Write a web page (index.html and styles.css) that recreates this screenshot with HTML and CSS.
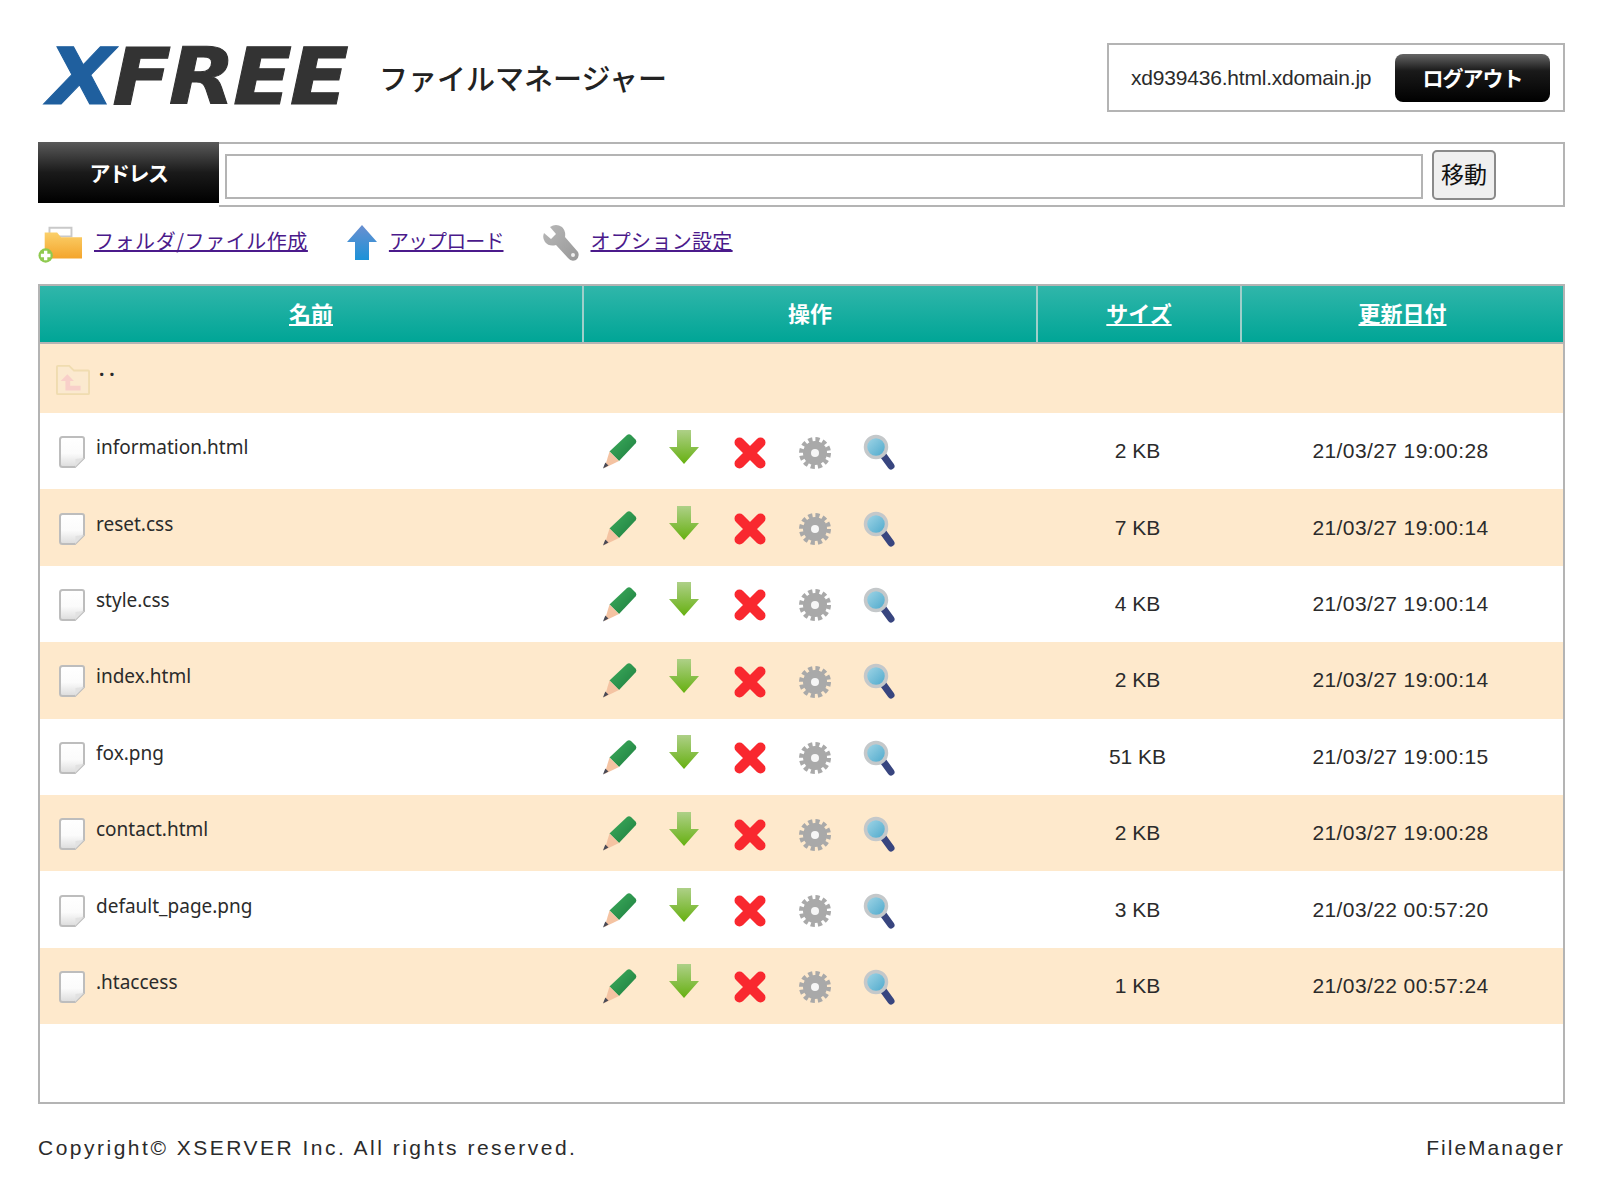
FILE: index.html
```html
<!DOCTYPE html>
<html lang="ja">
<head>
<meta charset="UTF-8" />
<title>XFREE ファイルマネージャー</title>
<link rel="stylesheet" href="styles.css">
</head>
<body>

<svg class="sprites" width="0" height="0">
  <defs>
    <linearGradient id="g-pencil" x1="0" y1="0" x2="1" y2="1">
      <stop offset="0" stop-color="#3fae5e" /><stop offset="1" stop-color="#1c7d3e" />
    </linearGradient>
    <linearGradient id="g-down" x1="0" y1="0" x2="0" y2="1">
      <stop offset="0" stop-color="#aed088" /><stop offset="1" stop-color="#66b010" />
    </linearGradient>
    <linearGradient id="g-lens" x1="0" y1="0" x2="1" y2="1">
      <stop offset="0" stop-color="#a6d8e8" /><stop offset="1" stop-color="#48a6ca" />
    </linearGradient>
    <linearGradient id="g-doc" x1="0" y1="0" x2="0" y2="1">
      <stop offset="0" stop-color="#fff" /><stop offset="0.55" stop-color="#fbfbfb" /><stop offset="1" stop-color="#dcdcdc" />
    </linearGradient>
    <linearGradient id="g-up" x1="0" y1="0" x2="0" y2="1">
      <stop offset="0" stop-color="#6a8fd0" /><stop offset="1" stop-color="#1c92d8" />
    </linearGradient>
    <linearGradient id="g-folder" x1="0" y1="0" x2="0" y2="1">
      <stop offset="0" stop-color="#fbd06a" /><stop offset="1" stop-color="#f4a52c" />
    </linearGradient>
    <linearGradient id="g-wrench" x1="0" y1="0" x2="1" y2="1">
      <stop offset="0" stop-color="#b8b8b8" /><stop offset="1" stop-color="#989898" />
    </linearGradient>
    <symbol id="i-pencil" viewBox="0 0 36 36">
      <path d="M8 18.500 25.500 2Q27.500 0.500 29.500 2L34 6.500Q35.500 8.500 34 10.500L17.500 28Z" fill="url(#g-pencil)" />
      <path d="M8 18.500 17.500 28 3 35Z" fill="#f4c3a2" />
      <path d="M3.800 29.500 7 32.500 1.500 35.500Z" fill="#4a4a55" />
    </symbol>
    <symbol id="i-down" viewBox="0 0 30 36">
      <path d="M8 1H22V18H30L15 35 0 18H8Z" fill="url(#g-down)" />
    </symbol>
    <symbol id="i-del" viewBox="0 0 34 34">
      <path d="M6.500 6.500 27.500 27.500M27.500 6.500 6.500 27.500" fill="none" stroke="#f9282f" stroke-width="10" stroke-linecap="round" />
    </symbol>
    <symbol id="i-gear" viewBox="0 0 34 34">
      <circle cx="17" cy="17" r="12" fill="#a9a9a9" />
      <circle cx="17" cy="17" r="13.500" fill="none" stroke="#a9a9a9" stroke-width="5" stroke-dasharray="4.100 2.970" />
      <circle cx="17" cy="17" r="4" fill="#f6f6f6" />
    </symbol>
    <symbol id="i-zoom" viewBox="0 0 34 37">
      <path d="M20 21 28 32" stroke="#38457f" stroke-width="7" stroke-linecap="round" />
      <circle cx="13" cy="13" r="10.500" fill="url(#g-lens)" stroke="#c4c8ca" stroke-width="3.500" />
    </symbol>
    <symbol id="i-doc" viewBox="0 0 26 32">
      <path d="M3.500 1H23Q25 1 25 3V22L16 31H3.500Q1 31 1 28.500V3.500Q1 1 3.500 1Z" fill="url(#g-doc)" stroke="#bdbdbd" stroke-width="2" />
      <path d="M16 31 16.500 23 25 22Z" fill="#e2e2e2" />
    </symbol>
    <symbol id="i-parent" viewBox="0 0 36 32">
      <path d="M2 1H14L19 6H34Q35 6 35 7V30Q35 31 34 31H2Q1 31 1 30V2Q1 1 2 1Z" fill="#fbe9cf" stroke="#f0dcb0" stroke-width="2" />
      <path d="M12 10 19 17H15V22H26V27H10V17H5Z" fill="#f8cfc9" />
    </symbol>
    <symbol id="i-newfolder" viewBox="0 0 46 38">
      <path d="M12 1H35V10H12Z" fill="#fff" stroke="#c9c9c9" stroke-width="2" />
      <path d="M7 6H20L24 11H46V33H7Z" fill="url(#g-folder)" />
      <circle cx="8" cy="30" r="7.500" fill="#8fca4f" />
      <path d="M8 25V35M3 30H13" stroke="#fff" stroke-width="3.500" />
    </symbol>
    <symbol id="i-upload" viewBox="0 0 30 36">
      <path d="M15 0 30 17H22V35H8V17H0Z" fill="url(#g-up)" />
    </symbol>
    <symbol id="i-wrench" viewBox="0 0 38 38">
      <path d="M2 9 9 15 14 10 8 3Q14-1 20 3 24 7 23 13L36 28Q38 33 34 36 29 38 26 34L14 21Q7 23 3 18 0 14 2 9Z" fill="url(#g-wrench)" />
      <circle cx="31" cy="31" r="2" fill="#eee" />
    </symbol>
  </defs>
</svg>

<div class="page">
  <header class="top">
    <div class="brand">
      <span class="logo"><span class="logo-x">X</span>FREE</span>
      <span class="app-name">ファイルマネージャー</span>
    </div>
    <div class="account">
      <span class="host">xd939436.html.xdomain.jp</span>
      <a class="logout">ログアウト</a>
    </div>
  </header>

  <form class="address">
    <div class="address-label">アドレス</div>
    <div class="address-field">
      <input class="address-input" type="text" />
      <button class="address-go" type="button">移動</button>
    </div>
  </form>

  <nav class="tools">
    <svg class="tool-new"><use href="#i-newfolder" /></svg>
    <a class="tool-link tool-link-new" href="#">フォルダ/ファイル作成</a>
    <svg class="tool-up"><use href="#i-upload" /></svg>
    <a class="tool-link tool-link-up" href="#">アップロード</a>
    <svg class="tool-opt"><use href="#i-wrench" /></svg>
    <a class="tool-link tool-link-opt" href="#">オプション設定</a>
  </nav>

  <div class="files">
    <table class="file-table">
      <colgroup>
        <col class="col-name"><col class="col-ops"><col class="col-size"><col class="col-date">
      </colgroup>
      <thead>
        <tr>
          <th><a href="#">名前</a></th>
          <th>操作</th>
          <th><a href="#">サイズ</a></th>
          <th><a href="#">更新日付</a></th>
        </tr>
      </thead>
      <tbody>
        <tr class="row-parent">
          <td colspan="4"><div class="name"><svg class="ico-parent"><use href="#i-parent" /></svg><span class="dots">..</span></div></td>
        </tr>
        <tr>
          <td><div class="name"><svg class="ico-doc"><use href="#i-doc" /></svg><span>information.html</span></div></td>
          <td><div class="ops"><svg class="op-pencil"><use href="#i-pencil" /></svg><svg class="op-down"><use href="#i-down" /></svg><svg class="op-del"><use href="#i-del" /></svg><svg class="op-gear"><use href="#i-gear" /></svg><svg class="op-zoom"><use href="#i-zoom" /></svg></div></td>
          <td class="size">2 KB</td>
          <td class="date">21/03/27 19:00:28</td>
        </tr>
        <tr>
          <td><div class="name"><svg class="ico-doc"><use href="#i-doc" /></svg><span>reset.css</span></div></td>
          <td><div class="ops"><svg class="op-pencil"><use href="#i-pencil" /></svg><svg class="op-down"><use href="#i-down" /></svg><svg class="op-del"><use href="#i-del" /></svg><svg class="op-gear"><use href="#i-gear" /></svg><svg class="op-zoom"><use href="#i-zoom" /></svg></div></td>
          <td class="size">7 KB</td>
          <td class="date">21/03/27 19:00:14</td>
        </tr>
        <tr>
          <td><div class="name"><svg class="ico-doc"><use href="#i-doc" /></svg><span>style.css</span></div></td>
          <td><div class="ops"><svg class="op-pencil"><use href="#i-pencil" /></svg><svg class="op-down"><use href="#i-down" /></svg><svg class="op-del"><use href="#i-del" /></svg><svg class="op-gear"><use href="#i-gear" /></svg><svg class="op-zoom"><use href="#i-zoom" /></svg></div></td>
          <td class="size">4 KB</td>
          <td class="date">21/03/27 19:00:14</td>
        </tr>
        <tr>
          <td><div class="name"><svg class="ico-doc"><use href="#i-doc" /></svg><span>index.html</span></div></td>
          <td><div class="ops"><svg class="op-pencil"><use href="#i-pencil" /></svg><svg class="op-down"><use href="#i-down" /></svg><svg class="op-del"><use href="#i-del" /></svg><svg class="op-gear"><use href="#i-gear" /></svg><svg class="op-zoom"><use href="#i-zoom" /></svg></div></td>
          <td class="size">2 KB</td>
          <td class="date">21/03/27 19:00:14</td>
        </tr>
        <tr>
          <td><div class="name"><svg class="ico-doc"><use href="#i-doc" /></svg><span>fox.png</span></div></td>
          <td><div class="ops"><svg class="op-pencil"><use href="#i-pencil" /></svg><svg class="op-down"><use href="#i-down" /></svg><svg class="op-del"><use href="#i-del" /></svg><svg class="op-gear"><use href="#i-gear" /></svg><svg class="op-zoom"><use href="#i-zoom" /></svg></div></td>
          <td class="size">51 KB</td>
          <td class="date">21/03/27 19:00:15</td>
        </tr>
        <tr>
          <td><div class="name"><svg class="ico-doc"><use href="#i-doc" /></svg><span>contact.html</span></div></td>
          <td><div class="ops"><svg class="op-pencil"><use href="#i-pencil" /></svg><svg class="op-down"><use href="#i-down" /></svg><svg class="op-del"><use href="#i-del" /></svg><svg class="op-gear"><use href="#i-gear" /></svg><svg class="op-zoom"><use href="#i-zoom" /></svg></div></td>
          <td class="size">2 KB</td>
          <td class="date">21/03/27 19:00:28</td>
        </tr>
        <tr>
          <td><div class="name"><svg class="ico-doc"><use href="#i-doc" /></svg><span>default_page.png</span></div></td>
          <td><div class="ops"><svg class="op-pencil"><use href="#i-pencil" /></svg><svg class="op-down"><use href="#i-down" /></svg><svg class="op-del"><use href="#i-del" /></svg><svg class="op-gear"><use href="#i-gear" /></svg><svg class="op-zoom"><use href="#i-zoom" /></svg></div></td>
          <td class="size">3 KB</td>
          <td class="date">21/03/22 00:57:20</td>
        </tr>
        <tr>
          <td><div class="name"><svg class="ico-doc"><use href="#i-doc" /></svg><span>.htaccess</span></div></td>
          <td><div class="ops"><svg class="op-pencil"><use href="#i-pencil" /></svg><svg class="op-down"><use href="#i-down" /></svg><svg class="op-del"><use href="#i-del" /></svg><svg class="op-gear"><use href="#i-gear" /></svg><svg class="op-zoom"><use href="#i-zoom" /></svg></div></td>
          <td class="size">1 KB</td>
          <td class="date">21/03/22 00:57:24</td>
        </tr>
      </tbody>
    </table>
  </div>

  <footer class="foot">
    <span>Copyright© XSERVER Inc. All rights reserved.</span>
    <span class="foot-app">FileManager</span>
  </footer>
</div>

</body>
</html>
```

FILE: styles.css
```css
:root {
  --line: #b4b4b4;
  --stripe: #fee9cc;
  --text: #2b2b2b;
  --jp: "Noto Sans CJK JP", "Liberation Sans", sans-serif;
}
* {
  box-sizing: border-box;
}
body {
  margin: 0;
  background: #fff;
  color: var(--text);
  font-family: "Liberation Sans", "Noto Sans CJK JP", sans-serif;
}
.sprites {
  display: block;
}
.page {
  width: 1527px;
  margin-left: 38px;
  padding-top: 43px;
}

/* Header */
.top {
  display: flex;
  justify-content: space-between;
  align-items: flex-start;
  height: 99px;
}
.brand {
  display: flex;
  align-items: center;
  height: 68px;
}
.logo {
  display: inline-block;
  width: 341px;
  padding-left: 9px;
  font-family: "DejaVu Sans", sans-serif;
  font-size: 78px;
  font-weight: bold;
  font-style: italic;
  line-height: 68px;
  letter-spacing: -2px;
  color: #333;
  -webkit-text-stroke: 1px currentColor;
  transform: scaleX(1.105);
  transform-origin: left center;
  filter: blur(0.5px);
}
.logo-x {
  color: #1f5f9e;
}
.app-name {
  font-family: var(--jp);
  font-size: 29px;
  font-weight: 500;
  color: #222;
}
.account {
  display: flex;
  align-items: center;
  justify-content: space-between;
  width: 458px;
  height: 69px;
  padding: 0 13px 0 22px;
  border: 2px solid var(--line);
}
.host {
  font-size: 21px;
  letter-spacing: -0.2px;
}
.logout {
  width: 155px;
  height: 48px;
  border-radius: 8px;
  background: linear-gradient(#666, #1a1a1a 35%, #000);
  color: #fff;
  font-family: var(--jp);
  font-size: 21px;
  font-weight: 700;
  line-height: 46px;
  letter-spacing: -1px;
  text-align: center;
}

/* Address bar */
.address {
  display: flex;
  height: 65px;
}
.address-label {
  width: 181px;
  height: 61px;
  background: linear-gradient(#5a5a5a, #1a1a1a 50%, #000);
  color: #fff;
  font-family: var(--jp);
  font-size: 21px;
  font-weight: 700;
  line-height: 61px;
  letter-spacing: -1.5px;
  text-align: center;
}
.address-field {
  flex: 1;
  display: flex;
  align-items: flex-start;
  padding: 6px 0 0 6px;
  border: 2px solid var(--line);
  border-left: 0;
}
.address-input {
  width: 1198px;
  height: 45px;
  margin-top: 4px;
  border: 2px solid var(--line);
  background: #fff;
}
.address-go {
  width: 64px;
  height: 50px;
  margin-left: 9px;
  padding: 0 0 4px;
  border: 2px solid #8a8a8a;
  border-radius: 5px;
  background: #efefef;
  color: #111;
  font-family: var(--jp);
  font-size: 23px;
}

/* Tool links */
.tools {
  display: flex;
  align-items: center;
  height: 77px;
  padding-bottom: 11px;
}
.tools svg {
  flex: none;
  filter: blur(0.5px);
}
.tool-new {
  width: 44px;
  height: 38px;
  margin-top: 10px;
}
.tool-up {
  width: 30px;
  height: 36px;
  margin-left: 39px;
  margin-top: 6px;
}
.tool-opt {
  width: 38px;
  height: 38px;
  margin-left: 38px;
  margin-top: 6px;
}
.tool-link {
  margin-left: 11px;
  color: #4b1a8b;
  font-family: var(--jp);
  font-size: 20px;
}
.tool-link-new {
  margin-left: 12px;
  letter-spacing: 0.55px;
}
.tool-link-up {
  margin-left: 12px;
  letter-spacing: -0.9px;
}
.tool-link-opt {
  letter-spacing: 0.3px;
}

/* File table */
.files {
  height: 820px;
  border: 2px solid var(--line);
}
.file-table {
  width: 100%;
  border-collapse: collapse;
  table-layout: fixed;
}
.col-name {
  width: 543px;
}
.col-ops {
  width: 454px;
}
.col-size {
  width: 204px;
}
.file-table th {
  height: 57px;
  padding: 0 0 4px;
  background: linear-gradient(#30b6aa, #00a596);
  border-bottom: 2px solid var(--line);
  border-left: 2px solid #9fcfca;
  color: #fff;
  font-family: var(--jp);
  font-size: 22px;
  font-weight: 700;
  text-align: center;
}
.file-table th:first-child {
  border-left: 0;
}
.file-table th a {
  color: #fff;
}
.file-table td {
  height: 76.4px;
  padding: 0;
}
.file-table tbody tr:nth-child(odd) {
  background: var(--stripe);
}
.row-parent td {
  height: 70px !important;
}
.name {
  display: flex;
  align-items: center;
  padding-left: 19px;
  font-family: "Noto Sans", sans-serif;
  font-size: 19px;
}
.name span {
  margin-left: 11px;
  padding-bottom: 8px;
}
.name svg {
  flex: none;
  filter: blur(0.4px);
}
.ico-doc {
  width: 26px;
  height: 32px;
  margin-top: 2px;
}
.ico-parent {
  width: 34px;
  height: 32px;
  margin-left: -3px;
  margin-top: 2px;
}
.name .dots {
  margin-left: 9px;
  padding-bottom: 20px;
  letter-spacing: 5px;
  font-weight: 700;
}
.ops {
  display: flex;
  align-items: center;
  padding-left: 18px;
}
.ops svg {
  flex: none;
  filter: blur(0.5px);
}
.op-pencil {
  width: 37px;
  height: 36px;
}
.op-down {
  width: 30px;
  height: 36px;
  margin-left: 31px;
  margin-top: -9px;
}
.op-del {
  width: 34px;
  height: 34px;
  margin-left: 34px;
  margin-top: 3px;
}
.op-gear {
  width: 34px;
  height: 34px;
  margin-left: 31px;
  margin-top: 3px;
}
.op-zoom {
  width: 34px;
  height: 37px;
  margin-left: 31px;
  margin-top: 3px;
}
.size,
.date {
  padding-right: 3px !important;
  font-size: 21px;
  text-align: center;
}
.date {
  letter-spacing: 0.4px;
}

/* Footer */
.foot {
  display: flex;
  justify-content: space-between;
  margin-top: 32px;
  font-size: 21px;
  letter-spacing: 2.5px;
}
.foot-app {
  letter-spacing: 2px;
}
```
